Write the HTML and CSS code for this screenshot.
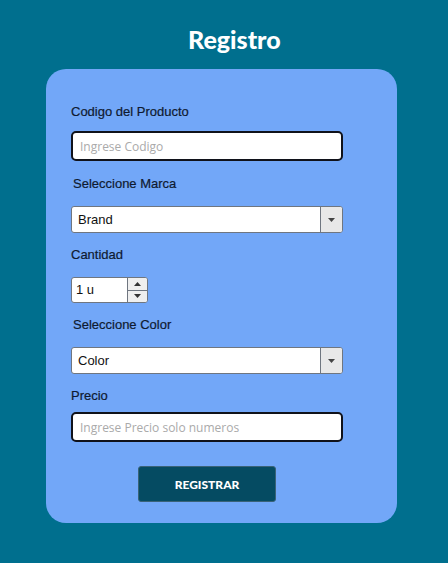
FILE: index.html
```html
<!DOCTYPE html>
<html lang="es">
<head>
<meta charset="utf-8">
<title>Registro</title>
<link rel="stylesheet" href="styles.css">
</head>
<body>
<main class="page">
  <h1 class="title">Registro</h1>
  <form class="card">
    <label class="label">Codigo del Producto</label>
    <input class="text-input first" type="text" placeholder="Ingrese Codigo">

    <label class="label label-indent">Seleccione Marca</label>
    <div class="select">
      <span class="select-value">Brand</span>
      <span class="select-arrow"><svg width="7" height="4" viewBox="0 0 7 4"><path d="M0 0H7L3.5 4Z" fill="#444"/></svg></span>
    </div>

    <label class="label">Cantidad</label>
    <div class="number">
      <span class="number-value">1 u</span>
      <span class="spinner">
        <span class="spin"><svg width="7" height="4" viewBox="0 0 7 4"><path d="M0 4H7L3.5 0Z" fill="#333"/></svg></span>
        <span class="spin spin-down"><svg width="7" height="4" viewBox="0 0 7 4"><path d="M0 0H7L3.5 4Z" fill="#333"/></svg></span>
      </span>
    </div>

    <label class="label label-indent">Seleccione Color</label>
    <div class="select">
      <span class="select-value">Color</span>
      <span class="select-arrow"><svg width="7" height="4" viewBox="0 0 7 4"><path d="M0 0H7L3.5 4Z" fill="#444"/></svg></span>
    </div>

    <label class="label label-tight">Precio</label>
    <input class="text-input" type="text" placeholder="Ingrese Precio solo numeros">

    <div class="actions">
      <button class="btn" type="button">REGISTRAR</button>
    </div>
  </form>
</main>
</body>
</html>
```
FILE: styles.css
```css
* { box-sizing: border-box; }
html, body { margin: 0; padding: 0; }
body {
  background: #006f8e;
  height: 563px;
  font-family: "Liberation Sans", Arial, sans-serif;
}
.page {
  display: flex;
  flex-direction: column;
  align-items: flex-start;
  padding-top: 24px;
}
.title {
  margin: 0 0 0 188px;
  font-family: Lato, "Open Sans", sans-serif;
  font-weight: 900;
  font-size: 25px;
  line-height: 30px;
  color: #ffffff;
}
.card {
  margin: 15px 0 0 46px;
  width: 351px;
  height: 454px;
  background: #72a7f8;
  border-radius: 20px;
  padding: 35px 25px 0;
  display: flex;
  flex-direction: column;
  align-items: flex-start;
}
.label {
  display: block;
  font-size: 13px;
  line-height: 16px;
  color: #0f1a30;
  margin: 0 0 14px;
  -webkit-text-stroke: 0.2px #0f1a30;
}
.label-indent { padding-left: 2px; }
.label-tight { margin-bottom: 8px; }
.text-input {
  display: block;
  width: 272px;
  height: 30px;
  margin: 0 0 15px;
  border: 2px solid #10121a;
  border-radius: 5px;
  background: #ffffff;
  padding: 0 7px;
  font-family: "Open Sans", Lato, sans-serif;
  font-size: 12px;
  color: #222;
  outline: none;
}
.text-input.first { margin-top: -3px; }
.text-input::placeholder { color: #aaaaaa; }
.select {
  display: flex;
  width: 272px;
  height: 27px;
  margin: 0 0 14px;
  background: #ffffff;
  border: 1px solid #6f7680;
  border-radius: 3px;
  overflow: hidden;
}
.select-value {
  flex: 1;
  font-size: 13px;
  line-height: 25px;
  color: #111;
  padding-left: 6px;
}
.select-arrow {
  width: 22px;
  background: #e8e8e8;
  border-left: 1px solid #6f7680;
  display: flex;
  align-items: center;
  justify-content: center;
}
.number {
  display: flex;
  width: 77px;
  height: 26px;
  margin: 0 0 14px;
  background: #ffffff;
  border: 1px solid #6f7680;
  border-radius: 3px;
  overflow: hidden;
}
.number-value {
  flex: 1;
  font-size: 13px;
  line-height: 24px;
  color: #111;
  padding-left: 4px;
}
.spinner {
  width: 20px;
  display: flex;
  flex-direction: column;
  border-left: 1px solid #6f7680;
  background: #efefef;
}
.spin {
  flex: 1;
  display: flex;
  align-items: center;
  justify-content: center;
}
.spin-down { border-top: 1px solid #6f7680; }
.actions {
  width: 100%;
  display: flex;
  justify-content: flex-start;
  padding: 9px 0 0 67px;
}
.btn {
  width: 138px;
  height: 36px;
  background: #054b62;
  border: 1px solid #3a6378;
  border-radius: 3px;
  color: #ffffff;
  font-family: Lato, "Open Sans", sans-serif;
  font-weight: 900;
  font-size: 12px;
  cursor: pointer;
}
```
